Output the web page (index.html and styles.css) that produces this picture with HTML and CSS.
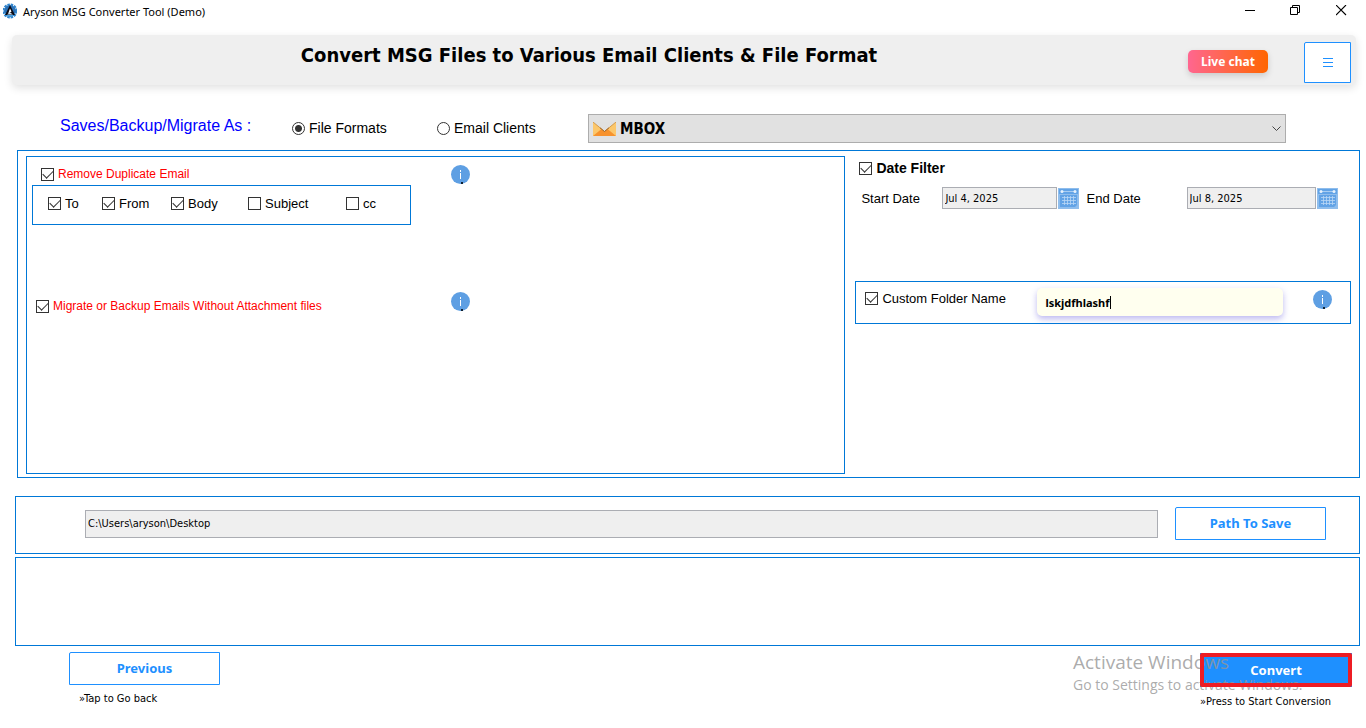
FILE: index.html
```html
<!DOCTYPE html>
<html lang="en">
<head>
    <meta charset="utf-8">
    <title>Aryson MSG Converter Tool (Demo)</title>
    <link rel="stylesheet" href="styles.css">
</head>
<body>

<!-- shared icons -->
<svg class="defs" width="0" height="0" aria-hidden="true">
    <symbol id="icon-info" viewBox="0 0 19 19">
        <circle cx="9.5" cy="9.5" r="9.5" fill="#5e9fe3"/>
        <rect x="9" y="5" width="1" height="2" fill="#fff"/>
        <rect x="9" y="8" width="1" height="6" fill="#fff"/>
        <rect x="10" y="17" width="2" height="2" fill="#123"/>
    </symbol>
    <symbol id="icon-calendar" viewBox="0 0 21 21">
        <rect width="21" height="21" fill="#8fbdec"/>
        <rect x="1" y="1" width="19" height="5" fill="#62a3e6"/>
        <path d="M3 3.5h15" stroke="#a9cdf2"/>
        <circle cx="4" cy="3.5" r="1.5" fill="#e6f1fc"/>
        <circle cx="17" cy="3.5" r="1.5" fill="#e6f1fc"/>
        <path d="M2 7h17v10l-2 2H2z" fill="#62a3e6"/>
        <path d="M4 9.5h14M4 12.5h14M4 15.5h14M6.5 8v9M9.5 8v9M12.5 8v9M15.5 8v9" stroke="#b9d7f5" stroke-width=".8" fill="none"/>
    </symbol>
</svg>

<div class="titlebar">
    <svg class="logo" width="14" height="16" viewBox="0 0 14 16">
        <circle cx="7" cy="8" r="6.5" fill="none" stroke="#2f86cf" stroke-width="2" stroke-dasharray="2.5 .9"/>
        <circle cx="7" cy="8" r="6" fill="#2a72b8"/>
        <path d="M1.5 10a6 6 0 0 0 11 0z" fill="#4aa5e6"/>
        <path d="M7 2l5 10H2z" fill="#0a0a14"/>
        <path d="M7 5.5l1.500 3-3.500 2.500z" fill="#fff"/>
        <path d="M4 11.5h6L7 9.5z" fill="#cfe4f7"/>
    </svg>
    <span class="app-name">Aryson MSG Converter Tool (Demo)</span>
    <div class="window-buttons">
        <button type="button" aria-label="Minimize"><svg width="11" height="11"><path d="M1 5.5h10" stroke="#000"/></svg></button>
        <button type="button" aria-label="Restore"><svg width="11" height="11" fill="none" stroke="#000"><path d="M.5 2.5h7v7h-7zM2.5 2.5v-2h7v7h-2"/></svg></button>
        <button type="button" aria-label="Close"><svg width="11" height="11"><path d="M0 0l10 10M10 0L0 10" stroke="#000" stroke-width="1.1"/></svg></button>
    </div>
</div>

<header class="header">
    <h1>Convert MSG Files to Various Email Clients &amp; File Format</h1>
    <button type="button" class="live-chat">Live chat</button>
    <button type="button" class="btn menu" aria-label="Menu"><svg width="10" height="9"><path d="M0 .5h10M0 4.5h10M0 8.5h10" stroke="#1e90ff"/></svg></button>
</header>

<div class="format-row">
    <span class="format-label">Saves/Backup/Migrate As :</span>
    <label class="radio"><input type="radio" name="target" checked>File Formats</label>
    <label class="radio"><input type="radio" name="target">Email Clients</label>
    <div class="format-select">
        <svg class="mail" width="23" height="14" viewBox="0 0 23 14">
            <rect width="23" height="14" fill="#fcc76b"/>
            <path d="M0 14l8.5-7h6l8.5 7z" fill="#f7922d"/>
            <path d="M0 0l11.5 9.5L23 0z" fill="#e0e0e0"/>
            <path d="M0 0l11.5 9.5L23 0" fill="none" stroke="#d39a4c"/>
            <path d="M7 5.8l4.5 3.7L16 5.8" fill="none" stroke="#a5672a"/>
        </svg>
        <select aria-label="Output format"><option>MBOX</option></select>
        <svg class="arrow" width="9" height="6"><path d="M.5 .5l4 4 4-4" fill="none" stroke="#444"/></svg>
    </div>
</div>

<main class="options">
    <section class="mail-options">
        <div class="option duplicate">
            <label class="check red"><input type="checkbox" checked>Remove Duplicate Email</label>
            <svg class="info" width="19" height="19"><use href="#icon-info"/></svg>
        </div>
        <div class="fields">
            <label class="check"><input type="checkbox" checked>To</label>
            <label class="check"><input type="checkbox" checked>From</label>
            <label class="check"><input type="checkbox" checked>Body</label>
            <label class="check"><input type="checkbox">Subject</label>
            <label class="check"><input type="checkbox">cc</label>
        </div>
        <div class="option attachment">
            <label class="check red"><input type="checkbox" checked>Migrate or Backup Emails Without Attachment files</label>
            <svg class="info" width="19" height="19"><use href="#icon-info"/></svg>
        </div>
    </section>

    <section class="filters">
        <label class="check date-filter"><input type="checkbox" checked>Date Filter</label>
        <div class="dates">
            <label for="start">Start Date</label>
            <input id="start" class="date" type="text" value="Jul 4, 2025" readonly>
            <button type="button" class="calendar" aria-label="Pick start date"><svg width="21" height="21"><use href="#icon-calendar"/></svg></button>
            <label for="end" class="end">End Date</label>
            <input id="end" class="date" type="text" value="Jul 8, 2025" readonly>
            <button type="button" class="calendar" aria-label="Pick end date"><svg width="21" height="21"><use href="#icon-calendar"/></svg></button>
        </div>
        <div class="custom-folder">
            <label class="check"><input type="checkbox" checked>Custom Folder Name</label>
            <div class="folder-name">
                <input type="text" aria-label="Custom folder name" value="lskjdfhlashf">
                <span class="caret"></span>
            </div>
            <svg class="info" width="19" height="19"><use href="#icon-info"/></svg>
        </div>
    </section>
</main>

<section class="save">
    <input type="text" class="path" aria-label="Save path" value="C:\Users\aryson\Desktop" readonly>
    <button type="button" class="btn">Path To Save</button>
</section>

<section class="log"></section>

<footer class="footer">
    <div class="previous">
        <button type="button" class="btn">Previous</button>
        <p>»Tap to Go back</p>
    </div>
    <div class="watermark">
        <div class="big">Activate Windows</div>
        <div>Go to Settings to activate Windows.</div>
    </div>
    <div class="next">
        <div class="highlight"><button type="button" class="convert">Convert</button></div>
        <p>»Press to Start Conversion</p>
    </div>
</footer>

</body>
</html>
```

FILE: styles.css
```css
* { box-sizing: border-box; }
body {
    margin: 0;
    background: #fff;
    color: #000;
    font: 13px "Liberation Sans", Arial, sans-serif;
}
button, input, select { font: inherit; color: inherit; margin: 0; }
button { padding: 0; }
svg { display: block; flex: none; }
p { margin: 0; }
.defs { position: absolute; }

/* window title */
.titlebar {
    display: flex;
    align-items: flex-start;
    height: 35px;
    padding: 3px 2px 0 3px;
}
.app-name {
    margin-left: 6px;
    font: 11px/18px "Noto Sans", sans-serif;
}
.window-buttons { display: flex; margin-left: auto; }
.window-buttons button {
    display: flex;
    justify-content: center;
    width: 46px;
    height: 20px;
    padding-top: 2px;
    border: 0;
    background: none;
}

/* header */
.header {
    display: flex;
    align-items: flex-start;
    height: 50px;
    margin: 0 10px 0 12px;
    padding: 7px 5px 0 0;
    border-radius: 5px;
    background: #efefef;
    box-shadow: 0 3px 8px rgba(0, 0, 0, .12);
}
h1 {
    flex: 1;
    margin: 0;
    padding-right: 22px;
    text-align: center;
    font: bold 20px/26px "DejaVu Sans Condensed", Tahoma, sans-serif;
}
.live-chat {
    width: 80px;
    height: 23px;
    margin: 8px 36px 0 0;
    border: 0;
    border-radius: 5px;
    background: linear-gradient(to right, #ff6690, #ff6600);
    box-shadow: 0 3px 6px rgba(0, 0, 0, .15);
    color: #fff;
    font: bold 12px "Noto Sans", sans-serif;
}
.btn {
    width: 151px;
    height: 33px;
    padding-bottom: 2px;
    border: 1px solid #1e90ff;
    border-top-left-radius: 2px;
    background: #fff;
    color: #1e90ff;
    font: bold 13px "Noto Sans", sans-serif;
}
.menu {
    display: flex;
    align-items: center;
    justify-content: center;
    width: 47px;
    height: 41px;
    padding: 0;
}

/* output format */
.format-row {
    display: flex;
    align-items: center;
    height: 29px;
    margin: 29px 80px 7px 60px;
    font-size: 14px;
}
.format-label {
    align-self: flex-start;
    width: 232px;
    color: #00f;
    font-size: 16px;
    line-height: 24px;
}
.radio {
    display: flex;
    align-items: center;
    width: 145px;
    line-height: 15px;
}
input[type=radio] {
    appearance: none;
    width: 13px;
    height: 13px;
    margin-right: 4px;
    border: 1px solid #333;
    border-radius: 50%;
    background: #fff;
}
input[type=radio]:checked { background: radial-gradient(#333 0 3px, #fff 4px); }
.format-select {
    position: relative;
    flex: 1;
    margin-left: 6px;
}
.format-select select {
    display: block;
    appearance: none;
    width: 100%;
    height: 29px;
    padding: 0 30px 0 31px;
    border: 1px solid #adadad;
    border-radius: 0;
    background: #e1e1e1;
    font: bold 15px "DejaVu Sans Condensed", Tahoma, sans-serif;
}
.mail { position: absolute; top: 8px; left: 5px; }
.arrow { position: absolute; top: 12px; right: 5px; }

/* option panels */
.options {
    display: flex;
    min-height: 328px;
    margin: 0 6px 18px 17px;
    padding: 5px 8px 3px;
    border: 1px solid #0078d7;
}
.mail-options {
    flex: 821;
    padding: 8px 5px;
    border: 1px solid #0078d7;
}
.option {
    display: flex;
    align-items: flex-start;
    justify-content: space-between;
    width: 438px;
}
.duplicate {
    margin-bottom: 1px;
    padding-left: 9px;
}
.duplicate .check { padding-top: 1px; }
.attachment { margin-top: 67px; padding-left: 4px; }
.attachment .check { padding-top: 6px; }
.check {
    display: flex;
    align-items: center;
    line-height: 17px;
    white-space: nowrap;
}
.red { color: #f00; font-size: 12px; }
input[type=checkbox] {
    appearance: none;
    flex: none;
    width: 13px;
    height: 13px;
    margin-right: 4px;
    border: 1px solid #333;
    background: #fff;
}
input[type=checkbox]:checked {
    display: flex;
    align-items: center;
    justify-content: center;
}
input[type=checkbox]:checked::after {
    content: "";
    width: 9px;
    height: 5px;
    margin-bottom: 3px;
    border: solid #333;
    border-width: 0 0 1px 1px;
    transform: rotate(-45deg);
}
.fields {
    display: grid;
    grid-template-columns: 54px 69px 77px 98px auto;
    align-items: center;
    width: 379px;
    height: 40px;
    padding: 0 15px 3px;
    border: 1px solid #0078d7;
}

.filters {
    flex: 504;
    min-width: 0;
    padding: 4px 0 0 10px;
}
.date-filter {
    margin-left: 4px;
    font-size: 14px;
    font-weight: bold;
}
.dates {
    display: flex;
    align-items: center;
    margin: 10px 13px 72px 6px;
}
.dates label { width: 81px; }
.dates .end { width: 100px; margin-left: 8px; }
.date {
    flex: 114;
    min-width: 0;
    height: 22px;
    padding: 0 2px;
    border: 1px solid #abadb3;
    border-radius: 0;
    background: #efefef;
    font: 11px "DejaVu Sans Condensed", Tahoma, sans-serif;
}
.end + .date { flex-grow: 130; }
.calendar {
    margin-left: 1px;
    border: 0;
    background: none;
}
.custom-folder {
    display: flex;
    height: 43px;
    padding: 6px 18px 0 9px;
    border: 1px solid #0078d7;
}
.custom-folder .check {
    width: 172px;
    height: 21px;
}
.folder-name {
    position: relative;
    flex: 1;
    min-width: 0;
    margin-right: 30px;
}
.folder-name input {
    display: block;
    width: 100%;
    height: 28px;
    padding: 0 8px;
    border: 0;
    border-radius: 5px;
    background: #ffffef;
    box-shadow: 0 3px 6px rgba(90, 80, 220, .4);
    font: bold 11px "Noto Sans", sans-serif;
}
.caret {
    position: absolute;
    top: 8px;
    left: 73px;
    width: 1px;
    height: 13px;
    background: #000;
}
.custom-folder .info { margin-top: 2px; }

/* destination */
.save {
    display: flex;
    align-items: center;
    height: 58px;
    margin: 0 6px 3px 15px;
    padding: 0 33px 3px 69px;
    border: 1px solid #0078d7;
}
.path {
    flex: 1;
    height: 28px;
    margin-right: 17px;
    padding: 0 2px;
    border: 1px solid #abadb3;
    border-radius: 0;
    background: #efefef;
    font: 11px "DejaVu Sans Condensed", Tahoma, sans-serif;
}
.log {
    height: 89px;
    margin: 0 6px 0 15px;
    border: 1px solid #0078d7;
}

/* bottom buttons */
.footer {
    position: relative;
    display: flex;
    justify-content: space-between;
    padding: 6px 14px 0 69px;
    font: 11px/16px "DejaVu Sans Condensed", Tahoma, sans-serif;
}
.previous p { padding: 6px 10px; }
.next { width: 152px; padding-top: 1px; }
.next p { padding-top: 7px; white-space: nowrap; }
.highlight { position: relative; }
.highlight::after {
    content: "";
    position: absolute;
    z-index: 2;
    inset: 0;
    border: 4px solid #ed1c24;
    border-radius: 2px;
    pointer-events: none;
}
.convert {
    display: block;
    width: 100%;
    height: 34px;
    border: 0;
    background: #1e90ff;
    color: #fff;
    font: bold 13px "Noto Sans", sans-serif;
}
/* sits over the Convert button, under its red frame */
.watermark {
    position: absolute;
    z-index: 1;
    top: 4px;
    right: 57px;
    width: 236px;
    color: rgba(150, 150, 150, .8);
    font: 14px/22px "Open Sans", sans-serif;
    white-space: nowrap;
    pointer-events: none;
}
.watermark .big { font-size: 19px; line-height: 24px; }
```
